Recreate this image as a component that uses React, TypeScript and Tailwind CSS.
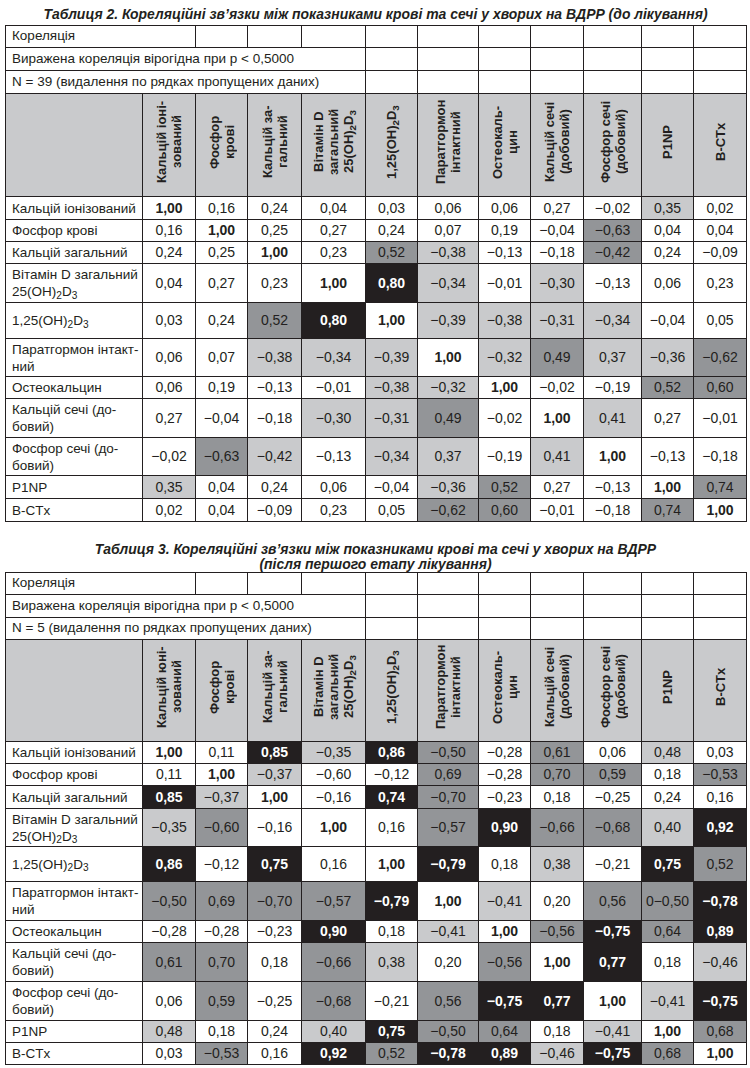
import React from 'react';

type Tone = 'w' | 'l' | 'm' | 'k';

const toneClass: Record<Tone, string> = {
  w: 'bg-white',
  l: 'bg-[#c9cacc]',
  m: 'bg-[#939598]',
  k: 'bg-[#231f20] text-white font-bold',
};

const colWidths = [
  'w-[137px]',
  'w-[53px]',
  'w-[52px]',
  'w-[54px]',
  'w-[64px]',
  'w-[52px]',
  'w-[61px]',
  'w-[52px]',
  'w-[53px]',
  'w-[58px]',
  'w-[52px]',
  'w-[53px]',
];

const D3 = (
  <>
    25(OH)<sub>2</sub>D<sub>3</sub>
  </>
);

const rowLabels: React.ReactNode[] = [
  'Кальцій іонізований',
  'Фосфор крові',
  'Кальцій загальний',
  <>
    Вітамін D загальний
    <br />
    {D3}
  </>,
  <>1,{D3}</>,
  <>
    Паратгормон інтакт-
    <br />
    ний
  </>,
  'Остеокальцин',
  <>
    Кальцій сечі (до-
    <br />
    бовий)
  </>,
  <>
    Фосфор сечі (до-
    <br />
    бовий)
  </>,
  'P1NP',
  'B-CTx',
];

const VSub = ({ children }: { children: React.ReactNode }) => (
  <sub className="static align-sub">{children}</sub>
);

function headerLabels(first: string): React.ReactNode[] {
  return [
    <>
      {first}
      <br />
      зований
    </>,
    <>
      Фосфор
      <br />
      крові
    </>,
    <>
      Кальцій за-
      <br />
      гальний
    </>,
    <>
      Вітамін D
      <br />
      загальний
      <br />
      25(OH)<VSub>2</VSub>D<VSub>3</VSub>
    </>,
    <>
      1,25(OH)<VSub>2</VSub>D<VSub>3</VSub>
    </>,
    <>
      Паратгормон
      <br />
      інтактний
    </>,
    <>
      Остеокаль-
      <br />
      цин
    </>,
    <>
      Кальцій сечі
      <br />
      (добовий)
    </>,
    <>
      Фосфор сечі
      <br />
      (добовий)
    </>,
    'P1NP',
    'B-CTx',
  ];
}

type TableData = {
  n: string;
  firstHeader: string;
  infoHeights: string[];
  headerHeight: string;
  rowHeights: string[];
  values: string[];
  tones: string[];
};

const table2: TableData = {
  n: 'N = 39 (видалення по рядках пропущених даних)',
  firstHeader: 'Кальцій іоні-',
  infoHeights: ['h-[22px]', 'h-[23px]', 'h-[23px]'],
  headerHeight: 'h-[103px]',
  rowHeights: [
    'h-[23px]',
    'h-[22px]',
    'h-[22px]',
    'h-[39px]',
    'h-[36px]',
    'h-[38px]',
    'h-[22px]',
    'h-[39px]',
    'h-[38px]',
    'h-[23px]',
    'h-[23px]',
  ],
  values: [
    '1,00 0,16 0,24 0,04 0,03 0,06 0,06 0,27 −0,02 0,35 0,02',
    '0,16 1,00 0,25 0,27 0,24 0,07 0,19 −0,04 −0,63 0,04 0,04',
    '0,24 0,25 1,00 0,23 0,52 −0,38 −0,13 −0,18 −0,42 0,24 −0,09',
    '0,04 0,27 0,23 1,00 0,80 −0,34 −0,01 −0,30 −0,13 0,06 0,23',
    '0,03 0,24 0,52 0,80 1,00 −0,39 −0,38 −0,31 −0,34 −0,04 0,05',
    '0,06 0,07 −0,38 −0,34 −0,39 1,00 −0,32 0,49 0,37 −0,36 −0,62',
    '0,06 0,19 −0,13 −0,01 −0,38 −0,32 1,00 −0,02 −0,19 0,52 0,60',
    '0,27 −0,04 −0,18 −0,30 −0,31 0,49 −0,02 1,00 0,41 0,27 −0,01',
    '−0,02 −0,63 −0,42 −0,13 −0,34 0,37 −0,19 0,41 1,00 −0,13 −0,18',
    '0,35 0,04 0,24 0,06 −0,04 −0,36 0,52 0,27 −0,13 1,00 0,74',
    '0,02 0,04 −0,09 0,23 0,05 −0,62 0,60 −0,01 −0,18 0,74 1,00',
  ],
  tones: [
    'wwwwwwwwwlw',
    'wwwwwwwwmww',
    'wwwwmlwwmww',
    'wwwwklwlwww',
    'wwmkwllllww',
    'wwlllwlmllm',
    'wwwwllwwwmm',
    'wwwllmwwlww',
    'wmlwllwlwww',
    'lwwwwlmwwwm',
    'wwwwwmmwwmw',
  ],
};

const table3: TableData = {
  n: 'N = 5 (видалення по рядках пропущених даних)',
  firstHeader: 'Кальцій юні-',
  infoHeights: ['h-[22px]', 'h-[23px]', 'h-[22px]'],
  headerHeight: 'h-[102px]',
  rowHeights: [
    'h-[22px]',
    'h-[21px]',
    'h-[23px]',
    'h-[38px]',
    'h-[35px]',
    'h-[39px]',
    'h-[21px]',
    'h-[39px]',
    'h-[39px]',
    'h-[22px]',
    'h-[22px]',
  ],
  values: [
    '1,00 0,11 0,85 −0,35 0,86 −0,50 −0,28 0,61 0,06 0,48 0,03',
    '0,11 1,00 −0,37 −0,60 −0,12 0,69 −0,28 0,70 0,59 0,18 −0,53',
    '0,85 −0,37 1,00 −0,16 0,74 −0,70 −0,23 0,18 −0,25 0,24 0,16',
    '−0,35 −0,60 −0,16 1,00 0,16 −0,57 0,90 −0,66 −0,68 0,40 0,92',
    '0,86 −0,12 0,75 0,16 1,00 −0,79 0,18 0,38 −0,21 0,75 0,52',
    '−0,50 0,69 −0,70 −0,57 −0,79 1,00 −0,41 0,20 0,56 0−0,50 −0,78',
    '−0,28 −0,28 −0,23 0,90 0,18 −0,41 1,00 −0,56 −0,75 0,64 0,89',
    '0,61 0,70 0,18 −0,66 0,38 0,20 −0,56 1,00 0,77 0,18 −0,46',
    '0,06 0,59 −0,25 −0,68 −0,21 0,56 −0,75 0,77 1,00 −0,41 −0,75',
    '0,48 0,18 0,24 0,40 0,75 −0,50 0,64 0,18 −0,41 1,00 0,68',
    '0,03 −0,53 0,16 0,92 0,52 −0,78 0,89 −0,46 −0,75 0,68 1,00',
  ],
  tones: [
    'wwklkmwmwlw',
    'wwlwwmwmmwm',
    'klwwkmwwwww',
    'lmwwwmkmmlk',
    'kwkwwkwlwkm',
    'mmmmkwlwmmk',
    'wwwkwlwmkmk',
    'mmwmlwmwkwl',
    'wmwmwmkkwlk',
    'lwwlkmmwlwm',
    'wmwkmkklkmw',
  ],
};

const cell = 'border border-[#231f20] p-0';

function CorrTable({ data }: { data: TableData }) {
  const heads = headerLabels(data.firstHeader);
  return (
    <table className="table-fixed border-collapse w-[741px] text-[#231f20] font-['Liberation_Sans',Arial,sans-serif]">
      <colgroup>
        {colWidths.map((w, i) => (
          <col key={i} className={w} />
        ))}
      </colgroup>
      <tbody>
        <tr className={data.infoHeights[0]}>
          <td colSpan={2} className={`${cell} pl-[6px] text-left text-[13.5px]`}>
            Кореляція
          </td>
          {Array.from({ length: 10 }).map((_, i) => (
            <td key={i} className={cell} />
          ))}
        </tr>
        <tr className={data.infoHeights[1]}>
          <td colSpan={5} className={`${cell} pl-[6px] text-left text-[13.5px]`}>
            Виражена кореляція вірогідна при p &lt; 0,5000
          </td>
          {Array.from({ length: 7 }).map((_, i) => (
            <td key={i} className={cell} />
          ))}
        </tr>
        <tr className={data.infoHeights[2]}>
          <td colSpan={5} className={`${cell} pl-[6px] text-left text-[13.5px]`}>
            {data.n}
          </td>
          {Array.from({ length: 7 }).map((_, i) => (
            <td key={i} className={cell} />
          ))}
        </tr>
        <tr className={data.headerHeight}>
          <th className={`${cell} bg-[#c9cacc]`} />
          {heads.map((h, i) => (
            <th key={i} className={`${cell} bg-[#c9cacc] text-center align-middle`}>
              <div className="inline-block h-[94px] [writing-mode:vertical-rl] rotate-180 text-center text-[13px] leading-[15px] font-bold">
                {h}
              </div>
            </th>
          ))}
        </tr>
        {data.values.map((row, r) => {
          const vals = row.split(' ');
          return (
            <tr key={r} className={data.rowHeights[r]}>
              <td className={`${cell} pl-[6px] pr-[2px] text-left text-[13.5px] leading-[17px]`}>
                {rowLabels[r]}
              </td>
              {vals.map((v, c) => {
                const t = data.tones[r][c] as Tone;
                return (
                  <td
                    key={c}
                    className={`${cell} text-center text-[14px] ${toneClass[t]} ${r === c ? 'font-bold' : ''}`}
                  >
                    {v}
                  </td>
                );
              })}
            </tr>
          );
        })}
      </tbody>
    </table>
  );
}

const titleText =
  "block whitespace-nowrap text-center text-[15px] leading-[15px] font-bold italic text-[#231f20] font-['Liberation_Sans',Arial,sans-serif] scale-x-[0.93]";

export default function App() {
  return (
    <div className="w-[750px] min-h-[1068px] bg-white pl-[5px]">
      <h2 className="w-[741px] pt-[6px] pb-[4px]">
        <span className={titleText}>
          Таблиця 2. Кореляційні зв’язки між показниками крові та сечі у хворих на ВДРР (до лікування)
        </span>
      </h2>
      <CorrTable data={table2} />
      <h2 className="w-[741px] pt-[19px] pb-[1px]">
        <span className={titleText}>
          Таблиця 3. Кореляційні зв’язки між показниками крові та сечі у хворих на ВДРР
        </span>
        <span className={titleText}>(після першого етапу лікування)</span>
      </h2>
      <CorrTable data={table3} />
    </div>
  );
}
